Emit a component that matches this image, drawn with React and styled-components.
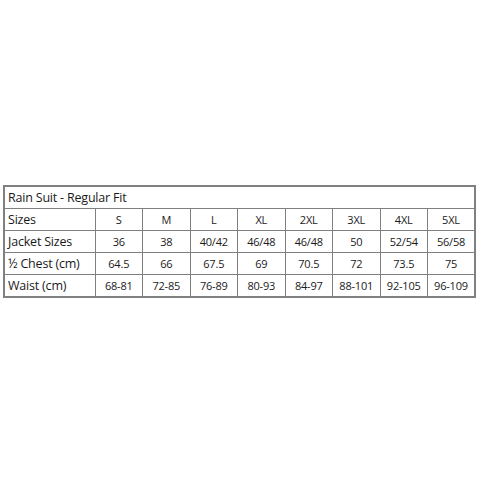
import styled, { createGlobalStyle } from "styled-components";

const sizes = ["S", "M", "L", "XL", "2XL", "3XL", "4XL", "5XL"];

const rows = [
  { label: "Sizes", values: sizes },
  {
    label: "Jacket Sizes",
    values: ["36", "38", "40/42", "46/48", "46/48", "50", "52/54", "56/58"],
  },
  {
    label: "½ Chest (cm)",
    values: ["64.5", "66", "67.5", "69", "70.5", "72", "73.5", "75"],
  },
  {
    label: "Waist (cm)",
    values: [
      "68-81",
      "72-85",
      "76-89",
      "80-93",
      "84-97",
      "88-101",
      "92-105",
      "96-109",
    ],
  },
];

const GlobalStyle = createGlobalStyle`
  body {
    margin: 0;
    background: #ffffff;
    font-family: "Open Sans", "Noto Sans", sans-serif;
  }
`;

const Page = styled.div`
  width: 480px;
  height: 480px;
  padding: 185px 4px 0 3px;
  box-sizing: border-box;
`;

const Table = styled.table`
  width: 473px;
  border-collapse: collapse;
  table-layout: fixed;
  border: 2px solid #808080;
  color: #1a1a1a;
  font-size: 12px;
`;

const Cell = styled.td`
  height: 21px;
  padding: 0 3px;
  border: 1px solid #808080;
  text-align: ${(p) => (p.$label ? "left" : "center")};
  font-size: ${(p) => (p.$label ? "12.5px" : "11px")};
  white-space: nowrap;
  letter-spacing: -0.2px;
`;

const Title = styled.td`
  height: 21px;
  padding: 0 3px;
  border: 1px solid #808080;
  font-size: 12.5px;
  letter-spacing: -0.2px;
`;

export default function App() {
  return (
    <>
      <GlobalStyle />
      <Page>
        <Table>
          <colgroup>
            <col style={{ width: 91 }} />
            {sizes.map((s) => (
              <col key={s} />
            ))}
          </colgroup>
          <tbody>
            <tr>
              <Title colSpan={9}>Rain Suit - Regular Fit</Title>
            </tr>
            {rows.map((row) => (
              <tr key={row.label}>
                <Cell $label>{row.label}</Cell>
                {row.values.map((v, i) => (
                  <Cell key={i}>{v}</Cell>
                ))}
              </tr>
            ))}
          </tbody>
        </Table>
      </Page>
    </>
  );
}
